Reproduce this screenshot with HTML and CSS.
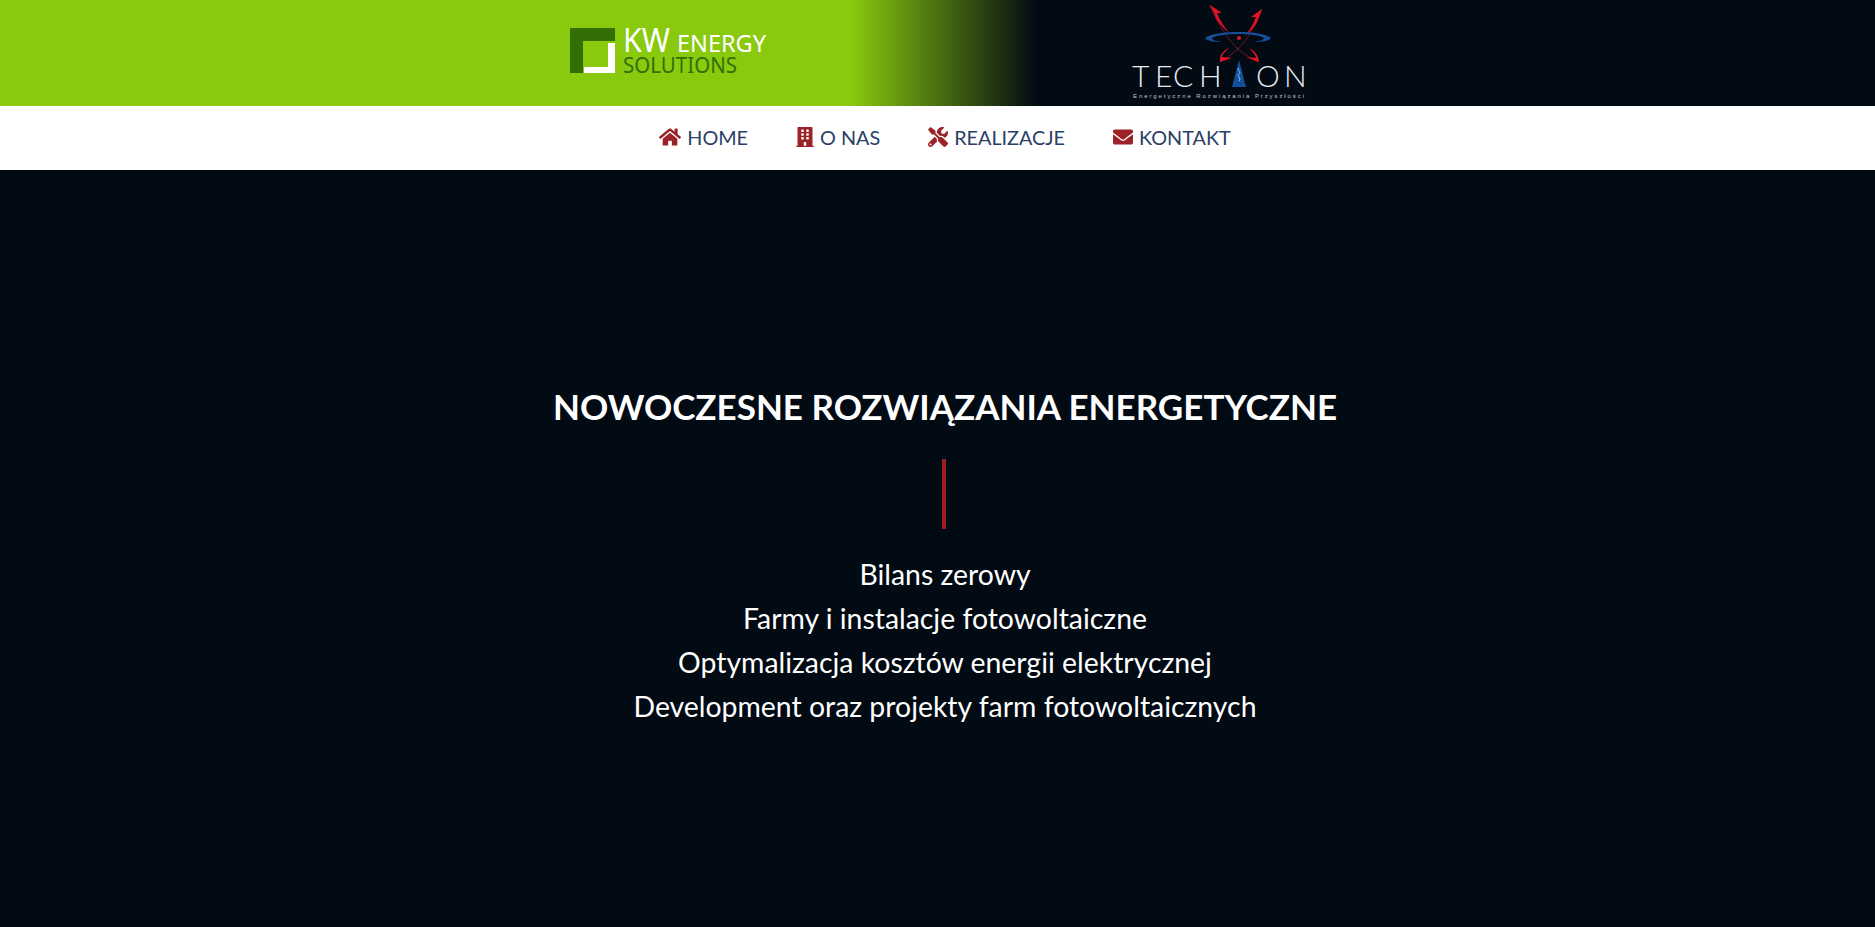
FILE: index.html
```html
<!DOCTYPE html>
<html lang="pl">

<head>
    <meta charset="UTF-8">
    <meta name="viewport" content="width=device-width, initial-scale=1.0">
    <title>KW Energy Solutions</title>
    <link rel="stylesheet" href="styles.css">
</head>

<body>

    <header class="top">
        <svg class="logo-kw" width="210" height="106" viewBox="0 0 210 106">
            <path fill="#336f05" d="M0 28h45v13H13v32H0z" />
            <path fill="#fff" d="M38 43h7v30H14v-6h24z" />
            <text class="kw-big" x="53" y="52" textLength="47" lengthAdjust="spacingAndGlyphs">KW</text>
            <text class="kw-mid" x="107" y="52" textLength="89" lengthAdjust="spacingAndGlyphs">ENERGY</text>
            <text class="kw-sub" x="53" y="73" textLength="114" lengthAdjust="spacingAndGlyphs">SOLUTIONS</text>
        </svg>
        <svg class="logo-techion" width="180" height="106" viewBox="0 0 180 106">
            <path class="orbit" d="M78 5C86 25 97 41 106 49C112 54 119 59 126 62" />
            <path class="orbit" d="M130 9C124 25 115 40 106 49C100 54 94 59 88 62" />
            <path class="tip" d="M78 5L90 13L85 13C87 19 91 25 97 33C89 26 84 20 83 15z" />
            <path class="tip" d="M130 9L119 17L124 17C122 23 118 29 113 36C120 30 125 24 126 20z" />
            <path class="tip" d="M97 48C93 52 90 55 90 57L100 58L88 62C87 56 90 51 97 48z" />
            <path class="tip" d="M117 48C121 52 124 56 124 58L114 57L127 62C127 56 123 51 117 48z" />
            <path class="ring" d="M73 38C80 33 95 32 107 32C119 32 132 33 139 38C137 41 130 42 122 42C128 41 132 40 132 38C127 35 118 34 107 34C96 34 85 35 80 38C80 40 84 41 90 42C82 42 75 41 73 38z" />
            <circle class="tip" cx="107" cy="38" r="2" />
            <path class="ring" d="M107 60L114 87H100z" />
            <path class="squiggle" d="M107 68c-3 2 3 4 0 6s3 4 0 7" />
            <text class="tc-word" x="0 23 41 67" y="87">TECH</text>
            <text class="tc-word" x="124 152" y="87">ON</text>
            <text class="tc-tag" x="1" y="98" textLength="171">Energetyczne Rozwiązania Przyszłości</text>
        </svg>
    </header>

    <nav class="menu">
        <a href="#"><svg class="ico" width="22" height="20" viewBox="0 0 576 512"><path d="M280.37 148.26L96 300.11V464a16 16 0 0 0 16 16l112.06-.29a16 16 0 0 0 15.92-16V368a16 16 0 0 1 16-16h64a16 16 0 0 1 16 16v95.64a16 16 0 0 0 16 16.05L464 480a16 16 0 0 0 16-16V300L295.67 148.26a12.19 12.19 0 0 0-15.3 0zM571.6 251.47L488 182.56V44.05a12 12 0 0 0-12-12h-56a12 12 0 0 0-12 12v72.61L318.47 43a48 48 0 0 0-61 0L4.34 251.47a12 12 0 0 0-1.6 16.9l25.5 31A12 12 0 0 0 45.15 301l235.22-193.74a12.19 12.19 0 0 1 15.3 0L530.9 301a12 12 0 0 0 16.9-1.6l25.5-31a12 12 0 0 0-1.7-16.93z" /></svg>HOME</a>
        <a href="#"><svg class="ico" width="18" height="20" viewBox="0 0 448 512"><path d="M436 480h-20V24c0-13.255-10.745-24-24-24H56C42.745 0 32 10.745 32 24v456H12c-6.627 0-12 5.373-12 12v20h448v-20c0-6.627-5.373-12-12-12zM128 76c0-6.627 5.373-12 12-12h40c6.627 0 12 5.373 12 12v40c0 6.627-5.373 12-12 12h-40c-6.627 0-12-5.373-12-12V76zm0 96c0-6.627 5.373-12 12-12h40c6.627 0 12 5.373 12 12v40c0 6.627-5.373 12-12 12h-40c-6.627 0-12-5.373-12-12v-40zm52 148h-40c-6.627 0-12-5.373-12-12v-40c0-6.627 5.373-12 12-12h40c6.627 0 12 5.373 12 12v40c0 6.627-5.373 12-12 12zm76 160h-64v-84c0-6.627 5.373-12 12-12h40c6.627 0 12 5.373 12 12v84zm64-172c0 6.627-5.373 12-12 12h-40c-6.627 0-12-5.373-12-12v-40c0-6.627 5.373-12 12-12h40c6.627 0 12 5.373 12 12v40zm0-96c0 6.627-5.373 12-12 12h-40c-6.627 0-12-5.373-12-12v-40c0-6.627 5.373-12 12-12h40c6.627 0 12 5.373 12 12v40zm0-96c0 6.627-5.373 12-12 12h-40c-6.627 0-12-5.373-12-12V76c0-6.627 5.373-12 12-12h40c6.627 0 12 5.373 12 12v40z" /></svg>O NAS</a>
        <a href="#"><svg class="ico" width="20" height="20" viewBox="0 0 512 512"><path d="M501.1 395.7L384 278.6c-23.1-23.1-57.6-27.6-85.4-13.9L192 158.1V96L64 0 0 64l96 128h62.1l106.6 106.6c-13.6 27.8-9.2 62.3 13.9 85.4l117.1 117.1c14.6 14.6 38.2 14.6 52.7 0l52.7-52.7c14.5-14.6 14.5-38.2 0-52.7zM331.7 225c28.3 0 54.9 11 74.9 31l19.4 19.4c15.8-6.9 30.8-16.5 43.8-29.5 37.1-37.1 49.7-89.3 37.9-136.7-2.2-9-13.5-12.1-20.1-5.5l-74.4 74.4-67.9-11.3L334 98.9l74.4-74.4c6.6-6.6 3.4-17.9-5.7-20.2-47.4-11.7-99.6.9-136.6 37.9-28.5 28.5-41.9 66.1-41.2 103.6l82.1 82.1c8.1-1.9 16.5-2.9 24.7-2.9zm-103.9 82l-56.7-56.7L18.7 402.8c-25 25-25 65.5 0 90.5s65.5 25 90.5 0l123.6-123.6c-7.6-19.9-9.9-41.6-5-62.7zM64 472c-13.2 0-24-10.8-24-24 0-13.3 10.7-24 24-24s24 10.7 24 24c0 13.2-10.7 24-24 24z" /></svg>REALIZACJE</a>
        <a href="#"><svg class="ico" width="20" height="20" viewBox="0 0 512 512"><path d="M502.3 190.8c3.9-3.1 9.7-.2 9.7 4.7V400c0 26.5-21.5 48-48 48H48c-26.5 0-48-21.5-48-48V195.6c0-5 5.7-7.8 9.7-4.7 22.4 17.4 52.1 39.5 154.1 113.6 21.1 15.4 56.7 47.8 92.2 47.6 35.7.3 72-32.8 92.3-47.6 102-74.1 131.6-96.3 154-113.7zM256 320c23.2.4 56.6-29.2 73.4-41.4 132.7-96.3 142.8-104.7 173.4-128.7 5.8-4.5 9.2-11.5 9.2-18.9v-19c0-26.5-21.5-48-48-48H48C21.5 64 0 85.5 0 112v19c0 7.4 3.4 14.3 9.2 18.9 30.6 23.9 40.7 32.4 173.4 128.7 16.8 12.2 50.2 41.8 73.4 41.4z" /></svg>KONTAKT</a>
    </nav>

    <main class="hero">
        <h1>NOWOCZESNE ROZWIĄZANIA ENERGETYCZNE</h1>
        <div class="bar"></div>
        <ul class="offer">
            <li>Bilans zerowy</li>
            <li>Farmy i instalacje fotowoltaiczne</li>
            <li>Optymalizacja kosztów energii elektrycznej</li>
            <li>Development oraz projekty farm fotowoltaicznych</li>
        </ul>
    </main>

</body>

</html>
```

FILE: styles.css
```css
html,
body {
    margin: 0;
    height: 100%;
}

body {
    display: flex;
    flex-direction: column;
    overflow: hidden;
    font-family: "Lato", "Noto Sans", sans-serif;
    background: #020a13;
}

.top {
    display: flex;
    height: 106px;
    padding-left: 570px;
    background: linear-gradient(90deg, #8aca0e 850px, #020a13 1037px);
}

.top svg {
    display: block;
    flex: none;
}

.logo-kw {
    margin-right: 352px;
}

.kw-big,
.kw-mid,
.kw-sub {
    font-family: "Noto Sans", sans-serif;
    fill: #fff;
}

.kw-big {
    font-size: 32px;
}

.kw-mid {
    font-size: 24px;
}

.kw-sub {
    font-size: 21px;
    fill: #336f05;
}

.orbit {
    fill: none;
    stroke: #7a1520;
    stroke-width: 1;
}

.tip {
    fill: #e01226;
}

.ring {
    fill: #14509a;
}

.squiggle {
    fill: none;
    stroke: #9fc4ea;
    stroke-width: 1;
}

.tc-word {
    font-family: "Lato", sans-serif;
    font-weight: 300;
    font-size: 30px;
    fill: #e8ecf0;
}

.tc-tag {
    font-family: "Liberation Sans", sans-serif;
    font-size: 6px;
    fill: #c4c8cc;
}

.menu {
    display: flex;
    justify-content: center;
    align-items: center;
    gap: 48px;
    height: 61px;
    padding: 0 0 3px 15px;
    background: #fff;
}

.menu a {
    display: flex;
    align-items: center;
    gap: 6px;
    font-size: 19.8px;
    color: #2a4066;
    text-decoration: none;
}

.ico {
    fill: #9b2226;
}

.hero {
    flex: 1;
    display: flex;
    flex-direction: column;
    align-items: center;
    padding: 211px 0 0 15px;
    color: #fff;
    text-align: center;
}

.hero h1 {
    margin: 0;
    font-size: 35px;
    font-weight: 700;
    line-height: 50px;
}

.bar {
    width: 4px;
    height: 70px;
    margin: 28px 2px 23px 0;
    background: #a01e26;
}

.offer {
    margin: 0;
    padding: 0;
    list-style: none;
    font-size: 28.4px;
    line-height: 44px;
}
```
